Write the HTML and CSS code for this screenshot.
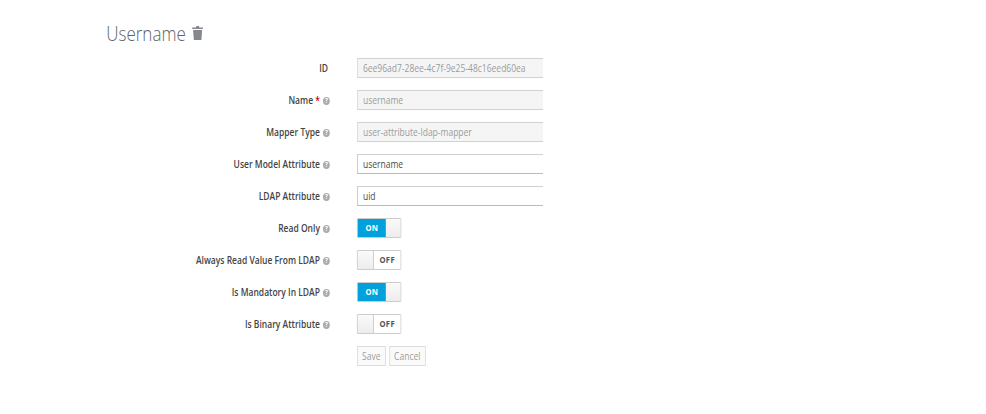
FILE: index.html
```html
<!DOCTYPE html>
<html lang="en">
<head>
    <meta charset="UTF-8">
    <title>Username</title>
    <link rel="stylesheet" href="styles.css">
</head>
<body>
    <div class="page">
        <h1 class="title">Username
            <svg class="trash" width="13" height="14" viewBox="0 0 13 14">
                <path d="M5 0h3l.6 1.500H13V3H0V1.500h4.400zM1.200 4h10.600l-.8 10H2z" fill="#85888c"/>
            </svg>
        </h1>
        <form class="form">
            <div class="row">
                <label class="label label-id">ID</label>
                <input class="input" type="text" value="6ee96ad7-28ee-4c7f-9e25-48c16eed60ea" readonly disabled>
            </div>
            <div class="row">
                <label class="label">Name <span class="req">*</span> <i class="help">?</i></label>
                <input class="input" type="text" value="username" readonly disabled>
            </div>
            <div class="row">
                <label class="label">Mapper Type <i class="help">?</i></label>
                <input class="input" type="text" value="user-attribute-ldap-mapper" readonly disabled>
            </div>
            <div class="row">
                <label class="label">User Model Attribute <i class="help">?</i></label>
                <input class="input" type="text" value="username">
            </div>
            <div class="row">
                <label class="label">LDAP Attribute <i class="help">?</i></label>
                <input class="input" type="text" value="uid">
            </div>
            <div class="row">
                <label class="label">Read Only <i class="help">?</i></label>
                <div class="switch"><span class="on">ON</span><span class="knob knob-right"></span></div>
            </div>
            <div class="row">
                <label class="label">Always Read Value From LDAP <i class="help">?</i></label>
                <div class="switch"><span class="knob knob-left"></span><span class="off">OFF</span></div>
            </div>
            <div class="row">
                <label class="label">Is Mandatory In LDAP <i class="help">?</i></label>
                <div class="switch"><span class="on">ON</span><span class="knob knob-right"></span></div>
            </div>
            <div class="row">
                <label class="label">Is Binary Attribute <i class="help">?</i></label>
                <div class="switch"><span class="knob knob-left"></span><span class="off">OFF</span></div>
            </div>
            <div class="row">
                <span class="label"></span>
                <div class="buttons">
                    <button type="button" class="btn">Save</button>
                    <button type="button" class="btn">Cancel</button>
                </div>
            </div>
        </form>
    </div>
</body>
</html>
```

FILE: styles.css
```css
* {
    box-sizing: border-box;
}

body {
    margin: 0;
    background: #fff;
    font-family: "Open Sans", "Liberation Sans", sans-serif;
    font-size: 10px;
    color: #444;
}

/* the whole page is narrower than its fonts, sizes below are before the squeeze */
.page {
    transform: scaleX(0.85);
    transform-origin: 0 0;
}

.title {
    display: flex;
    align-items: center;
    gap: 7px;
    height: 24px;
    margin: 21px 0 13px 125px;
    font-size: 20px;
    font-weight: 300;
    color: #5f6266;
}

.form {
    display: flex;
    flex-direction: column;
    gap: 12px;
}

.row {
    display: flex;
    align-items: center;
    height: 20px;
}

.label {
    width: 388px;
    margin-top: -1px;
    text-align: right;
    font-weight: 600;
    white-space: nowrap;
}

.label-id {
    padding-right: 2px;
}

.req {
    color: #c00;
}

.help {
    display: inline-block;
    width: 8px;
    height: 8px;
    margin-left: 1px;
    border-radius: 50%;
    background: #aaa;
    color: #fff;
    font-size: 7px;
    font-style: normal;
    font-weight: 700;
    line-height: 8px;
    text-align: center;
    vertical-align: 1px;
}

.input {
    width: 219px;
    height: 20px;
    margin-left: 32px;
    padding: 0 6px;
    border: 1px solid #bbb;
    border-top-color: #d1d1d1;
    border-right: none;
    border-radius: 1px 0 0 1px;
    background: #fff;
    font: 400 10px "Open Sans", "Liberation Sans", sans-serif;
    color: #4a4a4a;
}

.input:disabled {
    background: #f5f5f5;
    border-color: #d1d1d1;
    color: #9a9c9e;
}

.switch {
    display: flex;
    width: 52px;
    height: 20px;
    margin-left: 32px;
    border: 1px solid #c8c8c8;
    border-radius: 1px;
    font-size: 9px;
    font-weight: 700;
    letter-spacing: 0.4px;
    line-height: 18px;
    text-align: center;
}

.on {
    width: 33px;
    background: #00a1dd;
    color: #fff;
}

.off {
    flex: 1;
    background: #fff;
    color: #4d5258;
}

.knob {
    background: linear-gradient(#fafafa, #ededed);
}

.knob-right {
    flex: 1;
}

.knob-left {
    width: 19px;
    border-right: 1px solid #c8c8c8;
}

.buttons {
    display: flex;
    gap: 4px;
    margin-left: 32px;
}

.btn {
    height: 20px;
    padding: 0 5px;
    border: 1px solid #dcdcdc;
    background: #fafafa;
    font: 400 10px "Open Sans", "Liberation Sans", sans-serif;
    color: #9c9c9c;
}
```
